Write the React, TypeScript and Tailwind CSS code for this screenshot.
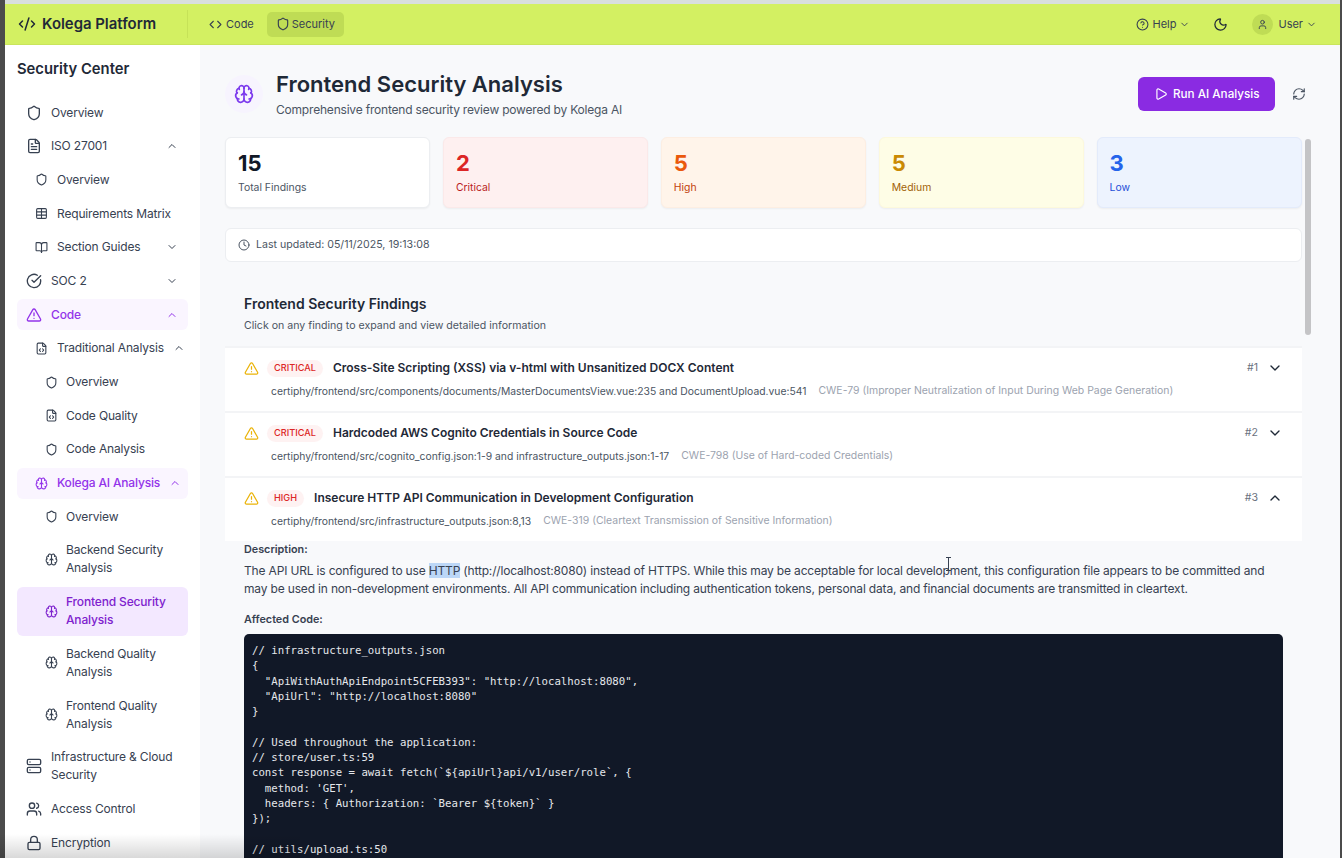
import {
  BookOpen,
  Brain,
  ChevronDown,
  ChevronUp,
  CircleCheckBig,
  CircleHelp,
  Clock,
  Code,
  CodeXml,
  FileCode,
  FileText,
  Lock,
  Moon,
  Play,
  RefreshCw,
  Server,
  Shield,
  Table,
  TriangleAlert,
  User,
  Users,
} from 'lucide-react';
import type { LucideIcon } from 'lucide-react';

type NavItem = {
  label: string[];
  icon: LucideIcon;
  level: 1 | 2 | 3;
  chevron?: 'up' | 'down';
  tone?: 'soft' | 'active';
};

const navItems: NavItem[] = [
  { label: ['Overview'], icon: Shield, level: 1 },
  { label: ['ISO 27001'], icon: FileText, level: 1, chevron: 'up' },
  { label: ['Overview'], icon: Shield, level: 2 },
  { label: ['Requirements Matrix'], icon: Table, level: 2 },
  { label: ['Section Guides'], icon: BookOpen, level: 2, chevron: 'down' },
  { label: ['SOC 2'], icon: CircleCheckBig, level: 1, chevron: 'down' },
  { label: ['Code'], icon: TriangleAlert, level: 1, chevron: 'up', tone: 'soft' },
  { label: ['Traditional Analysis'], icon: FileCode, level: 2, chevron: 'up' },
  { label: ['Overview'], icon: Shield, level: 3 },
  { label: ['Code Quality'], icon: FileCode, level: 3 },
  { label: ['Code Analysis'], icon: Shield, level: 3 },
  { label: ['Kolega AI Analysis'], icon: Brain, level: 2, chevron: 'up', tone: 'soft' },
  { label: ['Overview'], icon: Shield, level: 3 },
  { label: ['Backend Security', 'Analysis'], icon: Brain, level: 3 },
  { label: ['Frontend Security', 'Analysis'], icon: Brain, level: 3, tone: 'active' },
  { label: ['Backend Quality', 'Analysis'], icon: Brain, level: 3 },
  { label: ['Frontend Quality', 'Analysis'], icon: Brain, level: 3 },
  { label: ['Infrastructure & Cloud', 'Security'], icon: Server, level: 1 },
  { label: ['Access Control'], icon: Users, level: 1 },
  { label: ['Encryption'], icon: Lock, level: 1 },
];

const levelStyles = {
  1: { row: 'pl-[9px] gap-[9px]', icon: 'w-[16px] h-[16px]' },
  2: { row: 'pl-[18px] gap-[9px]', icon: 'w-[13px] h-[13px]' },
  3: { row: 'pl-[28px] gap-[8px]', icon: 'w-[13px] h-[13px]' },
};

const stats = [
  { value: '15', label: 'Total Findings', box: 'bg-white border-[#eceef1]', num: 'text-[#111827]', text: 'text-[#4b5563]' },
  { value: '2', label: 'Critical', box: 'bg-[#fef0f0] border-[#fbe9e9]', num: 'text-[#dc2626]', text: 'text-[#b91c1c]' },
  { value: '5', label: 'High', box: 'bg-[#fff4ea] border-[#fdeee2]', num: 'text-[#ea580c]', text: 'text-[#c2410c]' },
  { value: '5', label: 'Medium', box: 'bg-[#fefde6] border-[#fdf9dc]', num: 'text-[#ca8a04]', text: 'text-[#a16207]' },
  { value: '3', label: 'Low', box: 'bg-[#edf3fe] border-[#e3ebfb]', num: 'text-[#2563eb]', text: 'text-[#1d4ed8]' },
];

const findings = [
  {
    id: 1,
    severity: 'CRITICAL',
    title: 'Cross-Site Scripting (XSS) via v-html with Unsanitized DOCX Content',
    path: 'certiphy/frontend/src/components/documents/MasterDocumentsView.vue:235 and DocumentUpload.vue:541',
    cwe: 'CWE-79 (Improper Neutralization of Input During Web Page Generation)',
  },
  {
    id: 2,
    severity: 'CRITICAL',
    title: 'Hardcoded AWS Cognito Credentials in Source Code',
    path: 'certiphy/frontend/src/cognito_config.json:1-9 and infrastructure_outputs.json:1-17',
    cwe: 'CWE-798 (Use of Hard-coded Credentials)',
  },
  {
    id: 3,
    severity: 'HIGH',
    title: 'Insecure HTTP API Communication in Development Configuration',
    path: 'certiphy/frontend/src/infrastructure_outputs.json:8,13',
    cwe: 'CWE-319 (Cleartext Transmission of Sensitive Information)',
    open: true,
  },
];

const codeSample = `// infrastructure_outputs.json
{
  "ApiWithAuthApiEndpoint5CFEB393": "http://localhost:8080",
  "ApiUrl": "http://localhost:8080"
}

// Used throughout the application:
// store/user.ts:59
const response = await fetch(\`\${apiUrl}api/v1/user/role\`, {
  method: 'GET',
  headers: { Authorization: \`Bearer \${token}\` }
});

// utils/upload.ts:50`;

function TopBar() {
  return (
    <header className="h-[41px] shrink-0 bg-[#d3f062] border-b border-[#c9e55c] flex items-center justify-between pl-[13px] pr-[23px]">
      <div className="flex items-center">
        <div className="flex items-center gap-[6px] w-[170px] border-r border-[#c6e258] h-[28px]">
          <CodeXml className="w-[18px] h-[18px] text-[#1f2937]" />
          <span className="text-[14.9px] font-semibold text-[#1f2937]">Kolega Platform</span>
        </div>
        <nav className="flex items-center gap-[13px] ml-[21px]">
          <div className="flex items-center gap-[4px] text-[11px] text-[#374151]">
            <Code className="w-[13px] h-[13px]" />
            Code
          </div>
          <div className="flex items-center gap-[2px] h-[25px] w-[77px] pl-[9px] rounded-[5px] bg-[#bfdc55] text-[11px] text-[#374151]">
            <Shield className="w-[14px] h-[14px]" />
            Security
          </div>
        </nav>
      </div>
      <div className="flex items-center text-[11px] text-[#374151]">
        <CircleHelp className="w-[13px] h-[13px] mr-[3px]" />
        Help
        <ChevronDown className="w-[11px] h-[11px] ml-[3px]" />
        <Moon className="w-[15px] h-[15px] ml-[23px] text-[#1f2937]" />
        <div className="w-[21px] h-[21px] ml-[24px] rounded-full bg-[#bfdc55] flex items-center justify-center">
          <User className="w-[11px] h-[11px]" />
        </div>
        <span className="ml-[5px]">User</span>
        <ChevronDown className="w-[11px] h-[11px] ml-[3px]" />
      </div>
    </header>
  );
}

function Sidebar() {
  return (
    <aside className="w-[195px] shrink-0 bg-white pl-[12px] pr-[12px] pt-[15px] overflow-hidden">
      <h2 className="text-[14.8px] leading-[18px] font-semibold text-[#1f2937] mb-[19px]">Security Center</h2>
      <div className="flex flex-col gap-[2.7px]">
        {navItems.map((item, i) => {
          const Icon = item.icon;
          const style = levelStyles[item.level];
          const tone =
            item.tone === 'active'
              ? 'bg-[#f3e8ff] text-[#7e22ce] font-medium'
              : item.tone === 'soft'
                ? 'bg-[#faf5ff] text-[#9333ea] font-medium'
                : 'text-[#374151]';
          return (
            <div key={i} className={`flex items-center rounded-[6px] py-[6.5px] pr-[10px] text-[12px] tracking-[-0.16px] leading-[18px] ${style.row} ${tone}`}>
              <Icon className={`shrink-0 ${style.icon}`} />
              <span className="flex-1 whitespace-nowrap">
                {item.label.map((line) => (
                  <span key={line} className="block">{line}</span>
                ))}
              </span>
              {item.chevron === 'up' && <ChevronUp className="w-[12px] h-[12px] shrink-0" />}
              {item.chevron === 'down' && <ChevronDown className="w-[12px] h-[12px] shrink-0" />}
            </div>
          );
        })}
      </div>
    </aside>
  );
}

function FindingRow({ finding }: { finding: (typeof findings)[number] }) {
  return (
    <div className="bg-white border-t-2 border-[#f3f4f6] pl-[19px] pr-[19px] h-[65px] pt-[8px]">
      <div className="flex items-center h-[24px]">
        <TriangleAlert className="w-[15px] h-[15px] text-[#eab308] shrink-0" />
        <span className="ml-[8px] h-[17px] px-[7px] rounded-full bg-[#fef2f2] text-[#dc2626] text-[9.2px] font-medium flex items-center">
          {finding.severity}
        </span>
        <span className="ml-[10px] text-[12px] font-semibold text-[#1f2937]">{finding.title}</span>
        <span className="ml-auto text-[10.6px] text-[#6b7280]">#{finding.id}</span>
        {finding.open ? (
          <ChevronUp className="w-[16px] h-[16px] ml-[9px] text-[#1f2937]" />
        ) : (
          <ChevronDown className="w-[16px] h-[16px] ml-[9px] text-[#1f2937]" />
        )}
      </div>
      <div className="flex gap-[12px] pl-[27px] mt-[3px] leading-[16px]">
        <span className="text-[10.35px] text-[#4b5563]">{finding.path}</span>
        <span className="text-[10.45px] text-[#9ca3af]">{finding.cwe}</span>
      </div>
    </div>
  );
}

export default function App() {
  return (
    <div className="relative h-[858px] overflow-hidden bg-[#4b4b4b] pl-[5px] pr-[2px] font-['Inter',sans-serif]">
      <div className="h-[4px] bg-[#d9dfdc]" />
      <TopBar />
      <div className="flex h-[813px]">
        <Sidebar />
        <main className="flex-1 min-w-0 bg-[#f8f9fb] pl-[25px] pr-[38px] overflow-hidden">
          <div className="flex items-center h-[34px] mt-[32px]">
            <div className="w-[38px] h-[38px] rounded-full bg-[#f7f4fe] flex items-center justify-center">
              <Brain className="w-[20px] h-[20px] text-[#7c3aed]" />
            </div>
            <div className="ml-[13px] pt-[2px]">
              <h1 className="text-[22px] leading-[26px] font-semibold text-[#1f2937]">Frontend Security Analysis</h1>
              <p className="text-[12px] tracking-[-0.2px] leading-[18px] mt-[4px] text-[#4b5563]">
                Comprehensive frontend security review powered by Kolega AI
              </p>
            </div>
            <button className="ml-auto flex items-center gap-[5px] h-[34px] w-[137px] pl-[16px] rounded-[6px] bg-[#8a2be2] text-white text-[11.7px] font-medium">
              <Play className="w-[14px] h-[14px]" />
              <span className="pt-[2px]">Run AI Analysis</span>
            </button>
            <RefreshCw className="w-[14px] h-[14px] ml-[17px] mr-[-4px] text-[#4b5563]" />
          </div>

          <div className="grid grid-cols-5 gap-[12.5px] mt-[26px]">
            {stats.map((stat) => (
              <div key={stat.label} className={`h-[71px] rounded-[6px] border shadow-[0_1px_2px_rgba(0,0,0,0.05)] px-[12px] pt-[11px] ${stat.box}`}>
                <div className={`text-[22px] leading-[28px] font-bold ${stat.num}`}>{stat.value}</div>
                <div className={`text-[10.4px] leading-[16px] mt-[3px] ${stat.text}`}>{stat.label}</div>
              </div>
            ))}
          </div>

          <div className="flex items-center gap-[6px] h-[34px] mt-[20px] px-[12px] rounded-[6px] bg-white border border-[#eceef1] text-[10.6px] text-[#4b5563]">
            <Clock className="w-[12px] h-[12px]" />
            Last updated: 05/11/2025, 19:13:08
          </div>

          <div className="pl-[19px] pt-[33px] h-[84px]">
            <h3 className="text-[14px] leading-[18px] font-semibold text-[#1f2937]">Frontend Security Findings</h3>
            <p className="text-[10.6px] leading-[16px] mt-[5px] text-[#4b5563]">
              Click on any finding to expand and view detailed information
            </p>
          </div>

          {findings.map((finding) => (
            <FindingRow key={finding.id} finding={finding} />
          ))}

          <div className="pl-[19px] pr-[19px] pt-[1px]">
            <div className="text-[10.8px] leading-[16px] font-semibold text-[#374151]">Description:</div>
            <p className="text-[12px] tracking-[-0.17px] leading-[18px] mt-[4px] text-[#374151]">
              The API URL is configured to use <span className="bg-[#bcd7f7]">HTTP</span> (http://localhost:8080) instead of HTTPS. While this may be acceptable for local development, this configuration file appears to be committed and may be used in non-development environments. All API communication including authentication tokens, personal data, and financial documents are transmitted in cleartext.
            </p>
            <div className="text-[10.8px] leading-[16px] font-semibold text-[#374151] mt-[14px]">Affected Code:</div>
            <pre className="mt-[6px] rounded-[5px] bg-[#111827] text-[#e5e7eb] px-[8px] pt-[9px] pb-[20px] font-['DejaVu_Sans_Mono',monospace] text-[10.7px] leading-[15.3px]">
              {codeSample}
            </pre>
          </div>
        </main>
      </div>

      {/* scrollbar thumb from the recording */}
      <div className="absolute left-[1305px] top-[139px] w-[6px] h-[196px] rounded-full bg-[#c4c4c6]" />
      {/* text cursor caught in the recording */}
      <svg className="absolute left-[945px] top-[557px] w-[7px] h-[14px] text-[#374151]" viewBox="0 0 7 14" fill="none" stroke="currentColor" strokeWidth="1">
        <path d="M1 .5h5M3.5 .5v13M1 13.5h5" />
      </svg>
      {/* bottom fade from the recording */}
      <div className="absolute left-0 bottom-0 w-[300px] h-[24px] bg-gradient-to-b from-transparent to-black/15" />
    </div>
  );
}
